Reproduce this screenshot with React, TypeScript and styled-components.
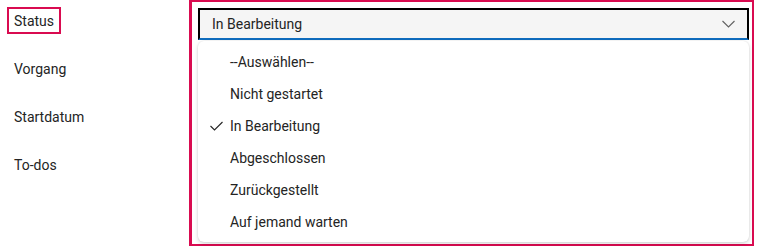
import styled, { createGlobalStyle } from "styled-components";

const Global = createGlobalStyle`
  html, body { margin: 0; padding: 0; background: #fff; }
  body {
    font-family: Roboto, "Noto Sans", "Liberation Sans", sans-serif;
    font-size: 14px;
    color: #242424;
  }
`;

const Page = styled.div`
  display: flex;
  width: 758px;
  height: 246px;
`;

const Labels = styled.div`
  width: 189px;
  display: flex;
  flex-direction: column;
  align-items: flex-start;
  gap: 21px;
  padding: 7px 0 0 7px;
  box-sizing: border-box;
`;

const Label = styled.div<{ $marked?: boolean }>`
  height: 27px;
  line-height: 24px;
  padding: 0 5px;
  box-sizing: border-box;
  border: 2px solid ${(p) => (p.$marked ? "#d90b50" : "transparent")};
`;

const Frame = styled.div`
  width: 565px;
  height: 246px;
  border: 2px solid #d90b50;
  border-left-width: 3px;
  box-sizing: border-box;
  padding: 6px 3px 0 6px;
  display: flex;
  flex-direction: column;
`;

const Combo = styled.div`
  height: 32px;
  box-sizing: border-box;
  background: #f5f5f5;
  border: 2px solid #000;
  border-bottom-color: #0f6cbd;
  display: flex;
  align-items: center;
  justify-content: space-between;
  padding: 0 12px;
`;

const Value = styled.span`
  line-height: 20px;
`;

const Listbox = styled.div`
  margin-top: 1px;
  background: #fff;
  border-radius: 6px;
  box-shadow: 0 0 2px rgba(0, 0, 0, 0.12), 0 2px 4px rgba(0, 0, 0, 0.14);
  padding: 5px 0 4px;
  display: flex;
  flex-direction: column;
`;

const Option = styled.div`
  height: 32px;
  display: flex;
  align-items: center;
  padding-left: 12px;
`;

const CheckSlot = styled.span`
  width: 20px;
  display: flex;
  align-items: center;
`;

const Check = () => (
  <svg width="13" height="10" viewBox="0 0 13 10">
    <polyline points="0.5,5 4.5,9 12.5,1" fill="none" stroke="#242424" strokeWidth="1.1" />
  </svg>
);

const Chevron = () => (
  <svg width="13" height="8" viewBox="0 0 13 8">
    <polyline points="0.5,1 6.5,7 12.5,1" fill="none" stroke="#616161" strokeWidth="1.1" />
  </svg>
);

const options = [
  "--Auswählen--",
  "Nicht gestartet",
  "In Bearbeitung",
  "Abgeschlossen",
  "Zurückgestellt",
  "Auf jemand warten",
];
const selected = "In Bearbeitung";

export default function App() {
  return (
    <Page>
      <Global />
      <Labels>
        <Label $marked>Status</Label>
        <Label>Vorgang</Label>
        <Label>Startdatum</Label>
        <Label>To-dos</Label>
      </Labels>
      <Frame>
        <Combo>
          <Value>{selected}</Value>
          <Chevron />
        </Combo>
        <Listbox>
          {options.map((o) => (
            <Option key={o}>
              <CheckSlot>{o === selected && <Check />}</CheckSlot>
              {o}
            </Option>
          ))}
        </Listbox>
      </Frame>
    </Page>
  );
}
